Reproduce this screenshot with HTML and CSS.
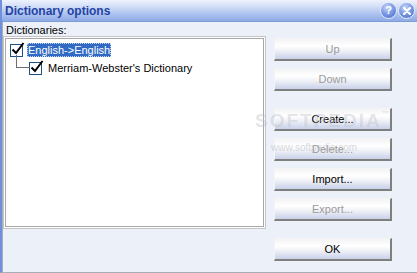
FILE: index.html
```html
<!DOCTYPE html>
<html>
<head>
<meta charset="utf-8">
<link rel="stylesheet" href="styles.css">
</head>
<body>
<div class="window">
  <div class="titlebar">
    <span class="title">Dictionary options</span>
    <div class="tb-btns">
      <span class="tb-btn">?</span>
      <span class="tb-btn">
        <svg width="8" height="8" viewBox="0 0 8 8"><path d="M1 1 L7 7 M7 1 L1 7" stroke="#fff" stroke-width="2.2" stroke-linecap="round"/></svg>
      </span>
    </div>
  </div>
  <div class="client">
    <div class="left">
      <div class="label">Dictionaries:</div>
      <div class="tree">
        <div class="row row1">
          <span class="cb"><svg width="15" height="15" viewBox="0 0 15 15"><rect x="0.5" y="2.5" width="12" height="12" fill="#fff" stroke="#1c5180"/><path d="M2.5 7.5 L6 11 L13.5 1" fill="none" stroke="#000" stroke-width="2"/></svg></span>
          <span class="item selected">English-&gt;English</span>
        </div>
        <div class="row row2">
          <span class="connector"></span>
          <span class="cb"><svg width="15" height="15" viewBox="0 0 15 15"><rect x="0.5" y="2.5" width="12" height="12" fill="#fff" stroke="#1c5180"/><path d="M2.5 7.5 L6 11 L13.5 1" fill="none" stroke="#000" stroke-width="2"/></svg></span>
          <span class="item">Merriam-Webster's Dictionary</span>
        </div>
      </div>
    </div>
    <div class="buttons">
      <div class="btn disabled">Up</div>
      <div class="btn disabled">Down</div>
      <div class="btn sep">Create...</div>
      <div class="btn disabled">Delete...</div>
      <div class="btn">Import...</div>
      <div class="btn disabled">Export...</div>
      <div class="btn sep">OK</div>
    </div>
    <div class="wm1">SOFTPEDIA<sup>™</sup></div>
    <div class="wm2">www.softpedia.com</div>
  </div>
</div>
</body>
</html>
```

FILE: styles.css
```css
html, body {
  margin: 0;
  padding: 0;
  background: #ecf0f9;
}
.window {
  width: 417px;
  height: 273px;
  box-sizing: border-box;
  background: #ecf0f9;
  font-family: "Liberation Sans", Arial, sans-serif;
  font-size: 11px;
  color: #000;
  border-left: 2px solid #6f90dc;
  border-bottom: 1px solid #a9adb6;
  position: relative;
  overflow: hidden;
}
.titlebar {
  height: 22px;
  box-sizing: border-box;
  margin-left: -2px;
  border-bottom: 1px solid #7f9cd8;
  background: linear-gradient(to bottom, #eef3fd 0%, #d3def7 30%, #a9c0ee 70%, #8eaae6 100%);
  display: flex;
  align-items: center;
  justify-content: space-between;
  padding: 0 2px 0 5px;
}
.title {
  font-weight: bold;
  font-size: 12px;
  color: #2443a3;
}
.tb-btns {
  display: flex;
  gap: 1px;
}
.tb-btn {
  width: 15px;
  height: 15px;
  border-radius: 50%;
  border: 1px solid #e8eefc;
  background: radial-gradient(circle at 40% 30%, #c6d6f8 0%, #7e9de4 45%, #3f66c8 100%);
  color: #fff;
  font-weight: bold;
  font-size: 11px;
  display: flex;
  align-items: center;
  justify-content: center;
  line-height: 1;
}
.client {
  display: flex;
  align-items: flex-start;
  border-left: 1px solid #a9adb6;
  height: 250px;
  box-sizing: border-box;
  position: relative;
}
.left {
  margin-left: 1px;
  width: 260px;
}
.label {
  height: 16px;
  line-height: 16px;
  padding-left: 2px;
}
.tree {
  height: 189px;
  box-sizing: border-box;
  background: #fff;
  border: 1px solid #a8a8a8;
  box-shadow: 0 0 0 1px #fff, 0 0 0 2px #c4c4c4;
  margin: 0 0 0 1px;
  padding-top: 2px;
}
.row {
  display: flex;
  align-items: center;
  height: 18px;
  position: relative;
}
.row1 {
  padding-left: 4px;
}
.row2 {
  padding-left: 23px;
}
.cb {
  width: 15px;
  height: 15px;
  margin-top: -2px;
  display: block;
}
.cb svg {
  display: block;
  overflow: visible;
}
.item {
  line-height: 14px;
  height: 14px;
  padding: 0 1px;
  margin-left: 2px;
  white-space: nowrap;
}
.row2 .item {
  margin-left: 3px;
}
.selected {
  background: #316ac5;
  color: #fff;
  outline: 1px dotted #c8d6f0;
  outline-offset: -1px;
}
.connector {
  position: absolute;
  left: 10px;
  top: -4px;
  width: 13px;
  height: 12px;
  border-left: 1px solid #6e6e6e;
  border-bottom: 1px solid #6e6e6e;
}
.buttons {
  margin-left: 10px;
  padding-top: 16px;
  display: flex;
  flex-direction: column;
  gap: 7px;
}
.btn {
  width: 118px;
  height: 23px;
  box-sizing: border-box;
  border-top: 1px solid #f4f4f4;
  border-left: 1px solid #f4f4f4;
  border-right: 2px solid #7f7f7f;
  border-bottom: 2px solid #7f7f7f;
  background: linear-gradient(to bottom, #f3f3f6 0%, #ffffff 35%, #eef0f6 60%, #c8d1ea 100%);
  display: flex;
  align-items: center;
  justify-content: center;
  font-size: 11px;
}
.btn.disabled {
  color: #9b9b9b;
}
.btn.sep {
  margin-top: 10px;
}
.wm1 {
  position: absolute;
  left: 252px;
  top: 88px;
  font-size: 19px;
  font-weight: bold;
  letter-spacing: 2px;
  color: rgba(190, 190, 200, 0.4);
  pointer-events: none;
}
.wm1 sup {
  font-size: 7px;
  vertical-align: top;
}
.wm2 {
  position: absolute;
  left: 268px;
  top: 120px;
  font-size: 10px;
  color: rgba(170, 170, 180, 0.45);
  pointer-events: none;
}
```
